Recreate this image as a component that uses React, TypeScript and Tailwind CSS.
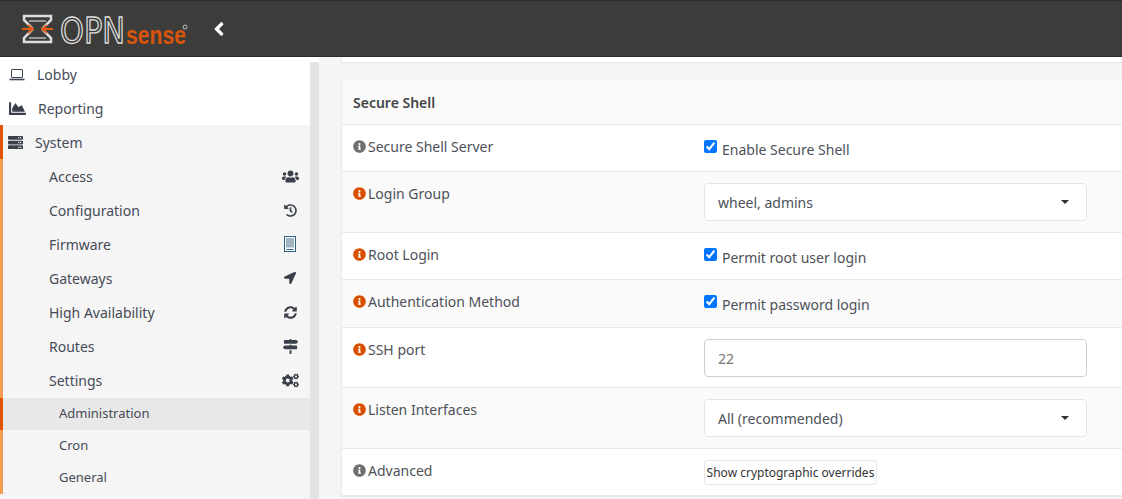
import React, { ReactNode } from 'react';
import {
  FaAngleLeft,
  FaChartArea,
  FaCogs,
  FaHistory,
  FaInfoCircle,
  FaLocationArrow,
  FaMapSigns,
  FaServer,
  FaSyncAlt,
  FaUsers,
} from 'react-icons/fa';

const LaptopIcon = () => (
  <svg width="16" height="13" viewBox="0 0 16 13" fill="none" stroke="#3f4550">
    <rect x="2.5" y="1.5" width="11" height="8" rx="0.5" />
    <path d="M0.5 11.5h15" strokeWidth="1.6" />
  </svg>
);

const TabletIcon = () => (
  <svg width="12" height="16" viewBox="0 0 12 16">
    <rect x="0.5" y="0.5" width="11" height="15" fill="#fff" stroke="#2f5f7f" />
    <path d="M2 2h8v9.5H2z" fill="#9fb4c0" />
    <path d="M2.5 13h7v1h-7z" fill="#2f5f7f" />
  </svg>
);

const Logo = () => (
  <svg width="170" height="42" viewBox="0 0 170 42" className="ml-[20px]">
    {/* hourglass mark */}
    <g fill="none" stroke="#dcdcdc" strokeWidth="2.5">
      <path d="M4 8h27v4l-8 8v2l8 8v4H4v-4l8-8v-2l-8-8z" />
    </g>
    <path d="M9 13h17M9 30h17" stroke="#9a9a9a" strokeWidth="2" />
    <path
      d="M2 21h11M8 17l5 4-5 4M33 21H22M27 17l-5 4 5 4"
      fill="none"
      stroke="#e05a10"
      strokeWidth="1.8"
    />
    <text
      x="40"
      y="35"
      textLength="65"
      lengthAdjust="spacingAndGlyphs"
      fontFamily="'DejaVu Sans', sans-serif"
      fontSize="35"
      fill="none"
      stroke="#dedede"
      strokeWidth="1.4"
    >
      OPN
    </text>
    <text
      x="106"
      y="36"
      textLength="60"
      lengthAdjust="spacingAndGlyphs"
      fontFamily="'Liberation Sans', sans-serif"
      fontWeight="700"
      fontSize="25"
      fill="#d9540b"
    >
      sense
    </text>
    <circle cx="165" cy="19" r="2" fill="none" stroke="#dedede" strokeWidth="0.8" />
  </svg>
);

const NavRow = ({ label, icon, bar }: { label: string; icon?: ReactNode; bar: string }) => (
  <div className={`flex h-[34.1px] items-center justify-between border-l-[3px] pl-[46px] pr-[11px] ${bar}`}>
    <span>{label}</span>
    <span className="flex w-[18px] justify-center text-[#3a3f4a]">{icon}</span>
  </div>
);

const SubRow = ({ label, active }: { label: string; active?: boolean }) => (
  <div
    className={`flex h-[32px] items-center border-l-[3px] pl-[56px] text-[13px] ${
      active ? 'border-[#e05400] bg-[#e8e8e8]' : 'border-[#f49d52]'
    }`}
  >
    {label}
  </div>
);

const Sidebar = () => (
  <aside className="w-[310px] shrink-0 text-[14px] text-[#464b57]">
    <div className="bg-white">
      <div className="flex h-[35px] items-center pl-[9px]">
        <LaptopIcon />
        <span className="ml-[12px]">Lobby</span>
      </div>
      <div className="flex h-[33px] items-center pl-[9px]">
        <FaChartArea className="text-[17px] text-[#3a3f4a]" />
        <span className="ml-[12px]">Reporting</span>
      </div>
    </div>
    <div className="bg-[#f5f5f5] pb-[10px]">
      <div className="flex h-[34px] items-center border-l-[3px] border-[#e05400] pl-[5px]">
        <FaServer className="text-[15px] text-[#3a3f4a]" />
        <span className="ml-[12px]">System</span>
      </div>
      <NavRow label="Access" bar="border-[#f49d52]" icon={<FaUsers className="text-[17px]" />} />
      <NavRow label="Configuration" bar="border-[#f49d52]" icon={<FaHistory className="text-[13px]" />} />
      <NavRow label="Firmware" bar="border-[#f49d52]" icon={<TabletIcon />} />
      <NavRow label="Gateways" bar="border-[#f49d52]" icon={<FaLocationArrow className="text-[12px]" />} />
      <NavRow label="High Availability" bar="border-[#f49d52]" icon={<FaSyncAlt className="text-[13px]" />} />
      <NavRow label="Routes" bar="border-[#f49d52]" icon={<FaMapSigns className="text-[15px]" />} />
      <NavRow label="Settings" bar="border-[#f49d52]" icon={<FaCogs className="text-[17px]" />} />
      <SubRow label="Administration" active />
      <SubRow label="Cron" />
      <SubRow label="General" />
    </div>
  </aside>
);

const Row = ({
  label,
  grey,
  alt,
  height,
  children,
}: {
  label: string;
  grey?: boolean;
  alt?: boolean;
  height: string;
  children: ReactNode;
}) => (
  <div className={`flex border-b border-[#e8e8e8] ${height} ${alt ? 'bg-[#fafafa]' : 'bg-white'}`}>
    <div className="flex w-[362px] shrink-0 items-start gap-[2px] pl-[11px] pt-[13px]">
      <FaInfoCircle className={`mt-[2px] text-[13px] ${grey ? 'text-[#6f6f6f]' : 'text-[#d94f00]'}`} />
      <span className="leading-[18px]">{label}</span>
    </div>
    {children}
  </div>
);

const Check = ({ label }: { label: string }) => (
  <label className="flex items-start pt-[14px]">
    <input type="checkbox" defaultChecked className="mt-[1px] h-[13px] w-[13px]" />
    <span className="ml-[5px] mt-[2px] leading-[18px]">{label}</span>
  </label>
);

const SelectBox = ({ value }: { value: string }) => (
  <div className="mt-[11px] flex h-[38px] w-[383px] items-center justify-between rounded-[4px] border border-[#e5e5e5] bg-white pl-[13px] pr-[17px]">
    <span>{value}</span>
    <span className="h-0 w-0 border-x-[4px] border-t-[4px] border-x-transparent border-t-[#333]" />
  </div>
);

export default function App() {
  return (
    <div className="flex h-[499px] w-[1122px] flex-col overflow-hidden bg-white font-['Noto_Sans',sans-serif] text-[14px] text-[#4d5159]">
      {/* Header */}
      <header className="flex h-[57px] shrink-0 items-center border-y border-y-[#2b2b2b] bg-[#3c3c3b]">
        <Logo />
        <FaAngleLeft className="ml-[18px] text-[22px] text-white" />
      </header>

      <div className="flex min-h-0 flex-1">
        <Sidebar />
        <div className="mt-[5px] w-[9px] shrink-0 bg-[#e4e4e4]" />

        {/* Main content */}
        <main className="min-w-0 flex-1 bg-[#f5f5f5] pl-[22px]">
          <div className="-mr-[20px] h-[6px] border-b border-l border-[#e8e8e8] bg-white" />
          <section className="-mr-[20px] mt-[17px] border-b border-l border-[#e8e8e8]">
            <div className="flex h-[45px] items-center border-b border-[#e8e8e8] bg-[#fafafa] pl-[11px] font-semibold text-[#454545]">
              Secure Shell
            </div>
            <Row label="Secure Shell Server" grey height="h-[47px]">
              <Check label="Enable Secure Shell" />
            </Row>
            <Row label="Login Group" alt height="h-[61px]">
              <SelectBox value="wheel, admins" />
            </Row>
            <Row label="Root Login" height="h-[47px]">
              <Check label="Permit root user login" />
            </Row>
            <Row label="Authentication Method" alt height="h-[48px]">
              <Check label="Permit password login" />
            </Row>
            <Row label="SSH port" height="h-[60px]">
              <div className="mt-[11px] flex h-[38px] w-[383px] items-center rounded-[4px] border border-[#cfcfcf] bg-white pl-[13px] text-[#777]">
                22
              </div>
            </Row>
            <Row label="Listen Interfaces" alt height="h-[61px]">
              <SelectBox value="All (recommended)" />
            </Row>
            <Row label="Advanced" grey height="h-[47px]">
              <button className="mt-[11px] h-[25px] w-[173px] rounded-[3px] border border-[#e5e5e5] bg-white text-[12px] text-[#333]">
                Show cryptographic overrides
              </button>
            </Row>
          </section>
        </main>
      </div>
    </div>
  );
}
